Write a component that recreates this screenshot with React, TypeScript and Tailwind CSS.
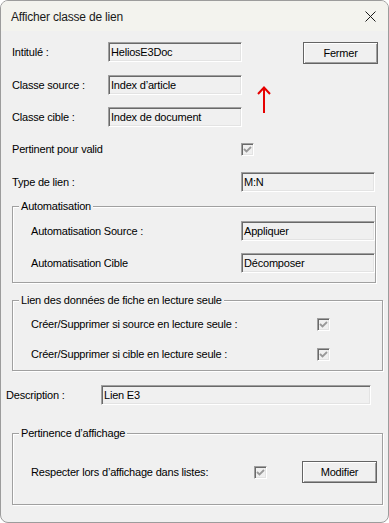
import React from 'react'

const font = { fontFamily: '"Liberation Sans", Arial, sans-serif' }

function Field({ value, w }: { value: string; w: string }) {
  return (
    <div
      className={`${w} h-[20px] flex items-center pl-[2px] bg-[#f0f0f0] border border-t-[#a0a0a0] border-l-[#a0a0a0] border-b-white border-r-white shadow-[inset_1px_1px_0_#696969,inset_-1px_-1px_0_#e3e3e3] text-[11px] text-black whitespace-nowrap overflow-hidden`}
    >
      {value}
    </div>
  )
}

function Check() {
  return (
    <div className="w-[13px] h-[13px] shrink-0 bg-[#f0f0f0] border border-t-[#a0a0a0] border-l-[#a0a0a0] border-b-white border-r-white shadow-[inset_1px_1px_0_#696969,inset_-1px_-1px_0_#e3e3e3] flex items-center justify-center">
      <svg width="9" height="9" viewBox="0 0 9 9">
        <path d="M1 4 L3.5 6.5 L8 2" fill="none" stroke="#999999" strokeWidth="1.8" />
      </svg>
    </div>
  )
}

function Btn({ label }: { label: string }) {
  return (
    <div className="w-[75px] h-[22px] shrink-0 flex items-center justify-center bg-[#f0f0f0] border border-[#646464] shadow-[inset_1px_1px_0_#ffffff,inset_-1px_-1px_0_#a0a0a0] text-[11px] text-black">
      {label}
    </div>
  )
}

function Group({ title, w, className, children }: { title: string; w: string; className: string; children: React.ReactNode }) {
  return (
    <div className={`relative ${w} ${className} border border-[#a0a0a0] shadow-[inset_1px_1px_0_#fff,1px_1px_0_#fff]`}>
      <span className="absolute left-[6px] top-[-8px] px-[2px] bg-[#f0f0f0] text-[11px] leading-[14px] text-black">{title}</span>
      {children}
    </div>
  )
}

export default function App() {
  return (
    <div className="w-[389px] h-[523px] bg-white">
      <div
        className="relative w-[389px] h-[523px] rounded-[8px] border border-[#9c9c9c] overflow-hidden bg-[#f0f0f0] text-black"
        style={font}
      >
        {/* title bar */}
        <div className="h-[30px] bg-[#f3f3ee] flex items-center justify-between pl-[10px] pr-[12px] pt-[1px]">
          <span className="text-[12px] tracking-[-0.2px] text-[#1a1a1a]">Afficher classe de lien</span>
          <svg width="11" height="11" viewBox="0 0 11 11">
            <path d="M0.5 0.5 L10.5 10.5 M10.5 0.5 L0.5 10.5" stroke="#1a1a1a" strokeWidth="1" />
          </svg>
        </div>

        <div className="pl-[11px] pt-[11px] text-[11px] tracking-[-0.2px]">
          <div className="flex items-start h-[22px]">
            <div className="w-[96px] h-[20px] flex items-center">Intitulé :</div>
            <Field value="HeliosE3Doc" w="w-[134px]" />
            <div className="ml-[61px]">
              <Btn label="Fermer" />
            </div>
          </div>
          <div className="flex items-center h-[20px] mt-[11px]">
            <div className="w-[96px]">Classe source :</div>
            <Field value="Index d’article" w="w-[134px]" />
          </div>
          <div className="flex items-center h-[20px] mt-[12px]">
            <div className="w-[96px]">Classe cible :</div>
            <Field value="Index de document" w="w-[134px]" />
          </div>
          <div className="flex items-center h-[13px] mt-[16px]">
            <div className="w-[229px]">Pertinent pour valid</div>
            <Check />
          </div>
          <div className="flex items-center h-[20px] mt-[16px]">
            <div className="w-[229px]">Type de lien :</div>
            <Field value="M:N" w="w-[134px]" />
          </div>

          <Group title="Automatisation" w="w-[364px]" className="mt-[14px] pt-[14px] pb-[9px]">
            <div className="flex items-center h-[20px] pl-[18px]">
              <div className="w-[210px]">Automatisation Source :</div>
              <Field value="Appliquer" w="w-[134px]" />
            </div>
            <div className="flex items-center h-[20px] mt-[12px] pl-[18px]">
              <div className="w-[210px]">Automatisation Cible</div>
              <Field value="Décomposer" w="w-[134px]" />
            </div>
          </Group>

          <Group title="Lien des données de fiche en lecture seule" w="w-[371px]" className="mt-[17px] pt-[17px] pb-[9px]">
            <div className="flex items-center h-[13px] pl-[18px]">
              <div className="w-[286px]">Créer/Supprimer si source en lecture seule :</div>
              <Check />
            </div>
            <div className="flex items-center h-[13px] mt-[17px] pl-[18px]">
              <div className="w-[286px]">Créer/Supprimer si cible en lecture seule :</div>
              <Check />
            </div>
          </Group>

          <div className="flex items-center h-[20px] mt-[14px] -ml-[6px]">
            <div className="w-[95px]">Description :</div>
            <Field value="Lien E3" w="w-[270px]" />
          </div>

          <Group title="Pertinence d’affichage" w="w-[371px]" className="mt-[28px] pt-[27px] pb-[21px]">
            <div className="flex items-center h-[22px] pl-[18px]">
              <div className="w-[223px]">Respecter lors d’affichage dans listes:</div>
              <Check />
              <div className="ml-[35px]">
                <Btn label="Modifier" />
              </div>
            </div>
          </Group>
        </div>

        {/* red annotation arrow */}
        <svg className="absolute left-[256px] top-[85px]" width="14" height="28" viewBox="0 0 14 28">
          <path d="M7 2 L7 27" stroke="#e60000" strokeWidth="2" />
          <path d="M1 8 L7 1.5 L13 8" fill="none" stroke="#e60000" strokeWidth="2" />
        </svg>
      </div>
    </div>
  )
}
